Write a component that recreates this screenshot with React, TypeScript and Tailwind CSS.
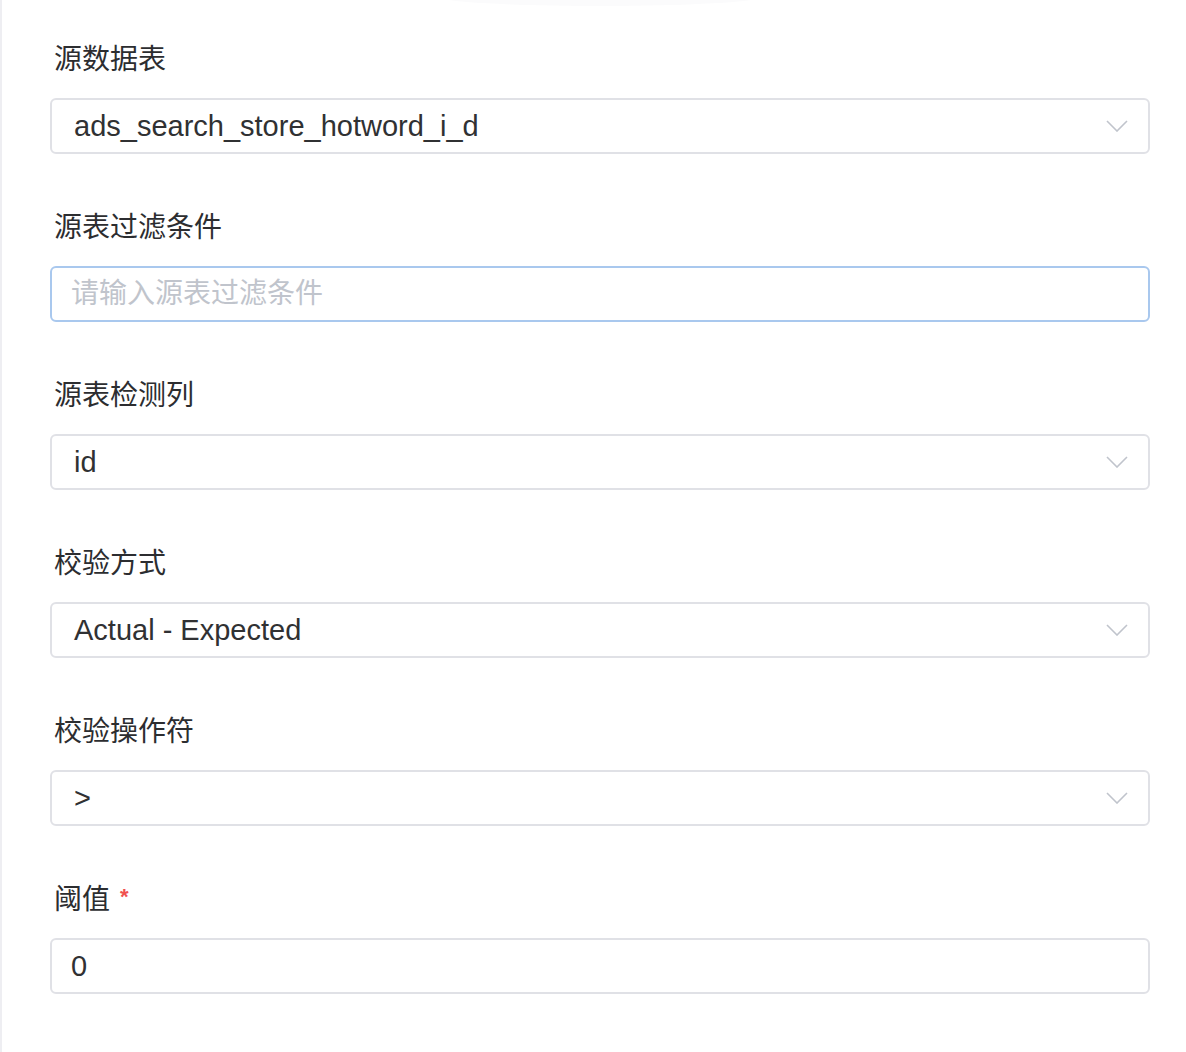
import React from "react";

const font = '"Liberation Sans", "Noto Sans CJK SC", sans-serif';

function Chevron() {
  return (
    <svg width="22" height="12" viewBox="0 0 22 12" className="shrink-0">
      <path d="M1 1 L11 11 L21 1" fill="none" stroke="#c0c4cc" strokeWidth="1.6" />
    </svg>
  );
}

function Label({ text, required }: { text: string; required?: boolean }) {
  return (
    <div className="h-[40px] flex items-center pl-[4px] text-[28px] text-[#2c2d30]">
      <span>{text}</span>
      {required && <span className="ml-[10px] text-[22px] font-bold text-[#f05050] -mt-[8px]">*</span>}
    </div>
  );
}

function Select({ value }: { value: string }) {
  return (
    <div className="h-[56px] flex items-center justify-between border-2 border-[#e0e1e6] rounded-[6px] bg-white pl-[22px] pr-[20px]">
      <span className="text-[29px] text-[#303133] leading-none">{value}</span>
      <Chevron />
    </div>
  );
}

function Field({ label, required, children }: { label: string; required?: boolean; children: React.ReactNode }) {
  return (
    <div className="mb-[54px]">
      <div className="mb-[18px]">
        <Label text={label} required={required} />
      </div>
      {children}
    </div>
  );
}

export default function App() {
  return (
    <div className="w-[1186px] h-[1052px] bg-white relative overflow-hidden" style={{ fontFamily: font }}>
      <div className="absolute left-[440px] top-[-12px] w-[320px] h-[18px] rounded-[50%] bg-[#fbfbfc]" />
      <div className="h-full border-l-2 border-[#eeeef2] pl-[48px] pr-[36px] pt-[40px] relative">
        <Field label="源数据表">
          <Select value="ads_search_store_hotword_i_d" />
        </Field>
        <Field label="源表过滤条件">
          <div className="h-[56px] flex items-center border-2 border-[#a9c8ee] rounded-[6px] bg-white pl-[19px]">
            <span className="text-[28px] text-[#c0c4cc]">请输入源表过滤条件</span>
          </div>
        </Field>
        <Field label="源表检测列">
          <Select value="id" />
        </Field>
        <Field label="校验方式">
          <Select value="Actual - Expected" />
        </Field>
        <Field label="校验操作符">
          <Select value=">" />
        </Field>
        <Field label="阈值" required>
          <div className="h-[56px] flex items-center border-2 border-[#e0e1e6] rounded-[6px] bg-white pl-[19px]">
            <span className="text-[29px] text-[#303133] leading-none">0</span>
          </div>
        </Field>
      </div>
    </div>
  );
}
